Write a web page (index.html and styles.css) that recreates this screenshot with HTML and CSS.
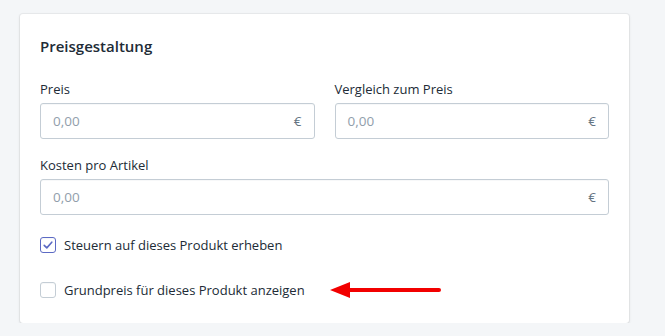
FILE: index.html
```html
<!DOCTYPE html>
<html lang="de">
<head>
<meta charset="utf-8">
<title>Preisgestaltung</title>
<link rel="stylesheet" href="styles.css">
</head>
<body>
<section class="card">
  <h2 class="card-title">Preisgestaltung</h2>
  <div class="field-row">
    <div class="field">
      <label class="field-label">Preis</label>
      <div class="input">
        <span class="input-value">0,00</span>
        <span class="input-suffix">€</span>
      </div>
    </div>
    <div class="field">
      <label class="field-label">Vergleich zum Preis</label>
      <div class="input">
        <span class="input-value">0,00</span>
        <span class="input-suffix">€</span>
      </div>
    </div>
  </div>
  <div class="field field-full">
    <label class="field-label">Kosten pro Artikel</label>
    <div class="input">
      <span class="input-value">0,00</span>
      <span class="input-suffix">€</span>
    </div>
  </div>
  <div class="check-row check-first">
    <span class="checkbox checked">
      <svg viewBox="0 0 16 16" width="16" height="16"><path d="M4.2 8.4 L6.8 10.9 L11.8 5.2" fill="none" stroke="#5c6ac4" stroke-width="1.6" stroke-linecap="round" stroke-linejoin="round"/></svg>
    </span>
    <span class="check-label">Steuern auf dieses Produkt erheben</span>
  </div>
  <div class="check-row check-second">
    <span class="checkbox"></span>
    <span class="check-label">Grundpreis für dieses Produkt anzeigen</span>
    <svg class="arrow" viewBox="0 0 114 18" width="114" height="18">
      <path d="M20 9 L110 9" stroke="#f20000" stroke-width="4" stroke-linecap="round"/>
      <polygon points="1,9 21,1 21,17" fill="#f20000"/>
    </svg>
  </div>
</section>
</body>
</html>
```

FILE: styles.css
```css
html, body {
  margin: 0;
  padding: 0;
}
body {
  background: #f4f6f8;
  font-family: "Open Sans", "Noto Sans", sans-serif;
  color: #212b36;
  font-size: 13px;
  padding: 14px 0 0 20px;
}
.card {
  width: 569px;
  background: #fff;
  border-radius: 3px;
  box-shadow: 0 0 0 1px rgba(63, 63, 68, 0.05), 0 1px 3px 0 rgba(63, 63, 68, 0.15);
  padding: 20px 20px 23px 20px;
}
.card-title {
  margin: 0 0 21px 0;
  font-size: 15px;
  font-weight: 600;
  line-height: 24px;
  color: #212b36;
}
.field-row {
  display: flex;
  gap: 20px;
}
.field {
  flex: 1;
  display: flex;
  flex-direction: column;
}
.field-full {
  margin-top: 16px;
}
.field-label {
  line-height: 20px;
  margin-bottom: 4px;
}
.input {
  height: 34px;
  border: 1px solid #c4cdd5;
  border-radius: 3px;
  box-shadow: inset 0 1px 0 0 rgba(99, 115, 129, 0.05);
  display: flex;
  align-items: center;
  justify-content: space-between;
  padding: 0 12px;
}
.input-value {
  color: #919eab;
  font-size: 13.5px;
}
.input-suffix {
  color: #637381;
  font-size: 13.5px;
}
.check-row {
  display: flex;
  align-items: center;
  height: 20px;
}
.check-first {
  margin-top: 20px;
}
.check-second {
  margin-top: 25px;
}
.checkbox {
  width: 14px;
  height: 14px;
  border: 1px solid #c4cdd5;
  border-radius: 3px;
  box-shadow: inset 0 1px 0 0 rgba(99, 115, 129, 0.05);
  position: relative;
  flex: none;
}
.checkbox.checked {
  border-color: #5c6ac4;
}
.checkbox svg {
  position: absolute;
  left: -1px;
  top: -1px;
}
.check-label {
  margin-left: 8px;
}
.arrow {
  margin-left: 24px;
  flex: none;
}
```
